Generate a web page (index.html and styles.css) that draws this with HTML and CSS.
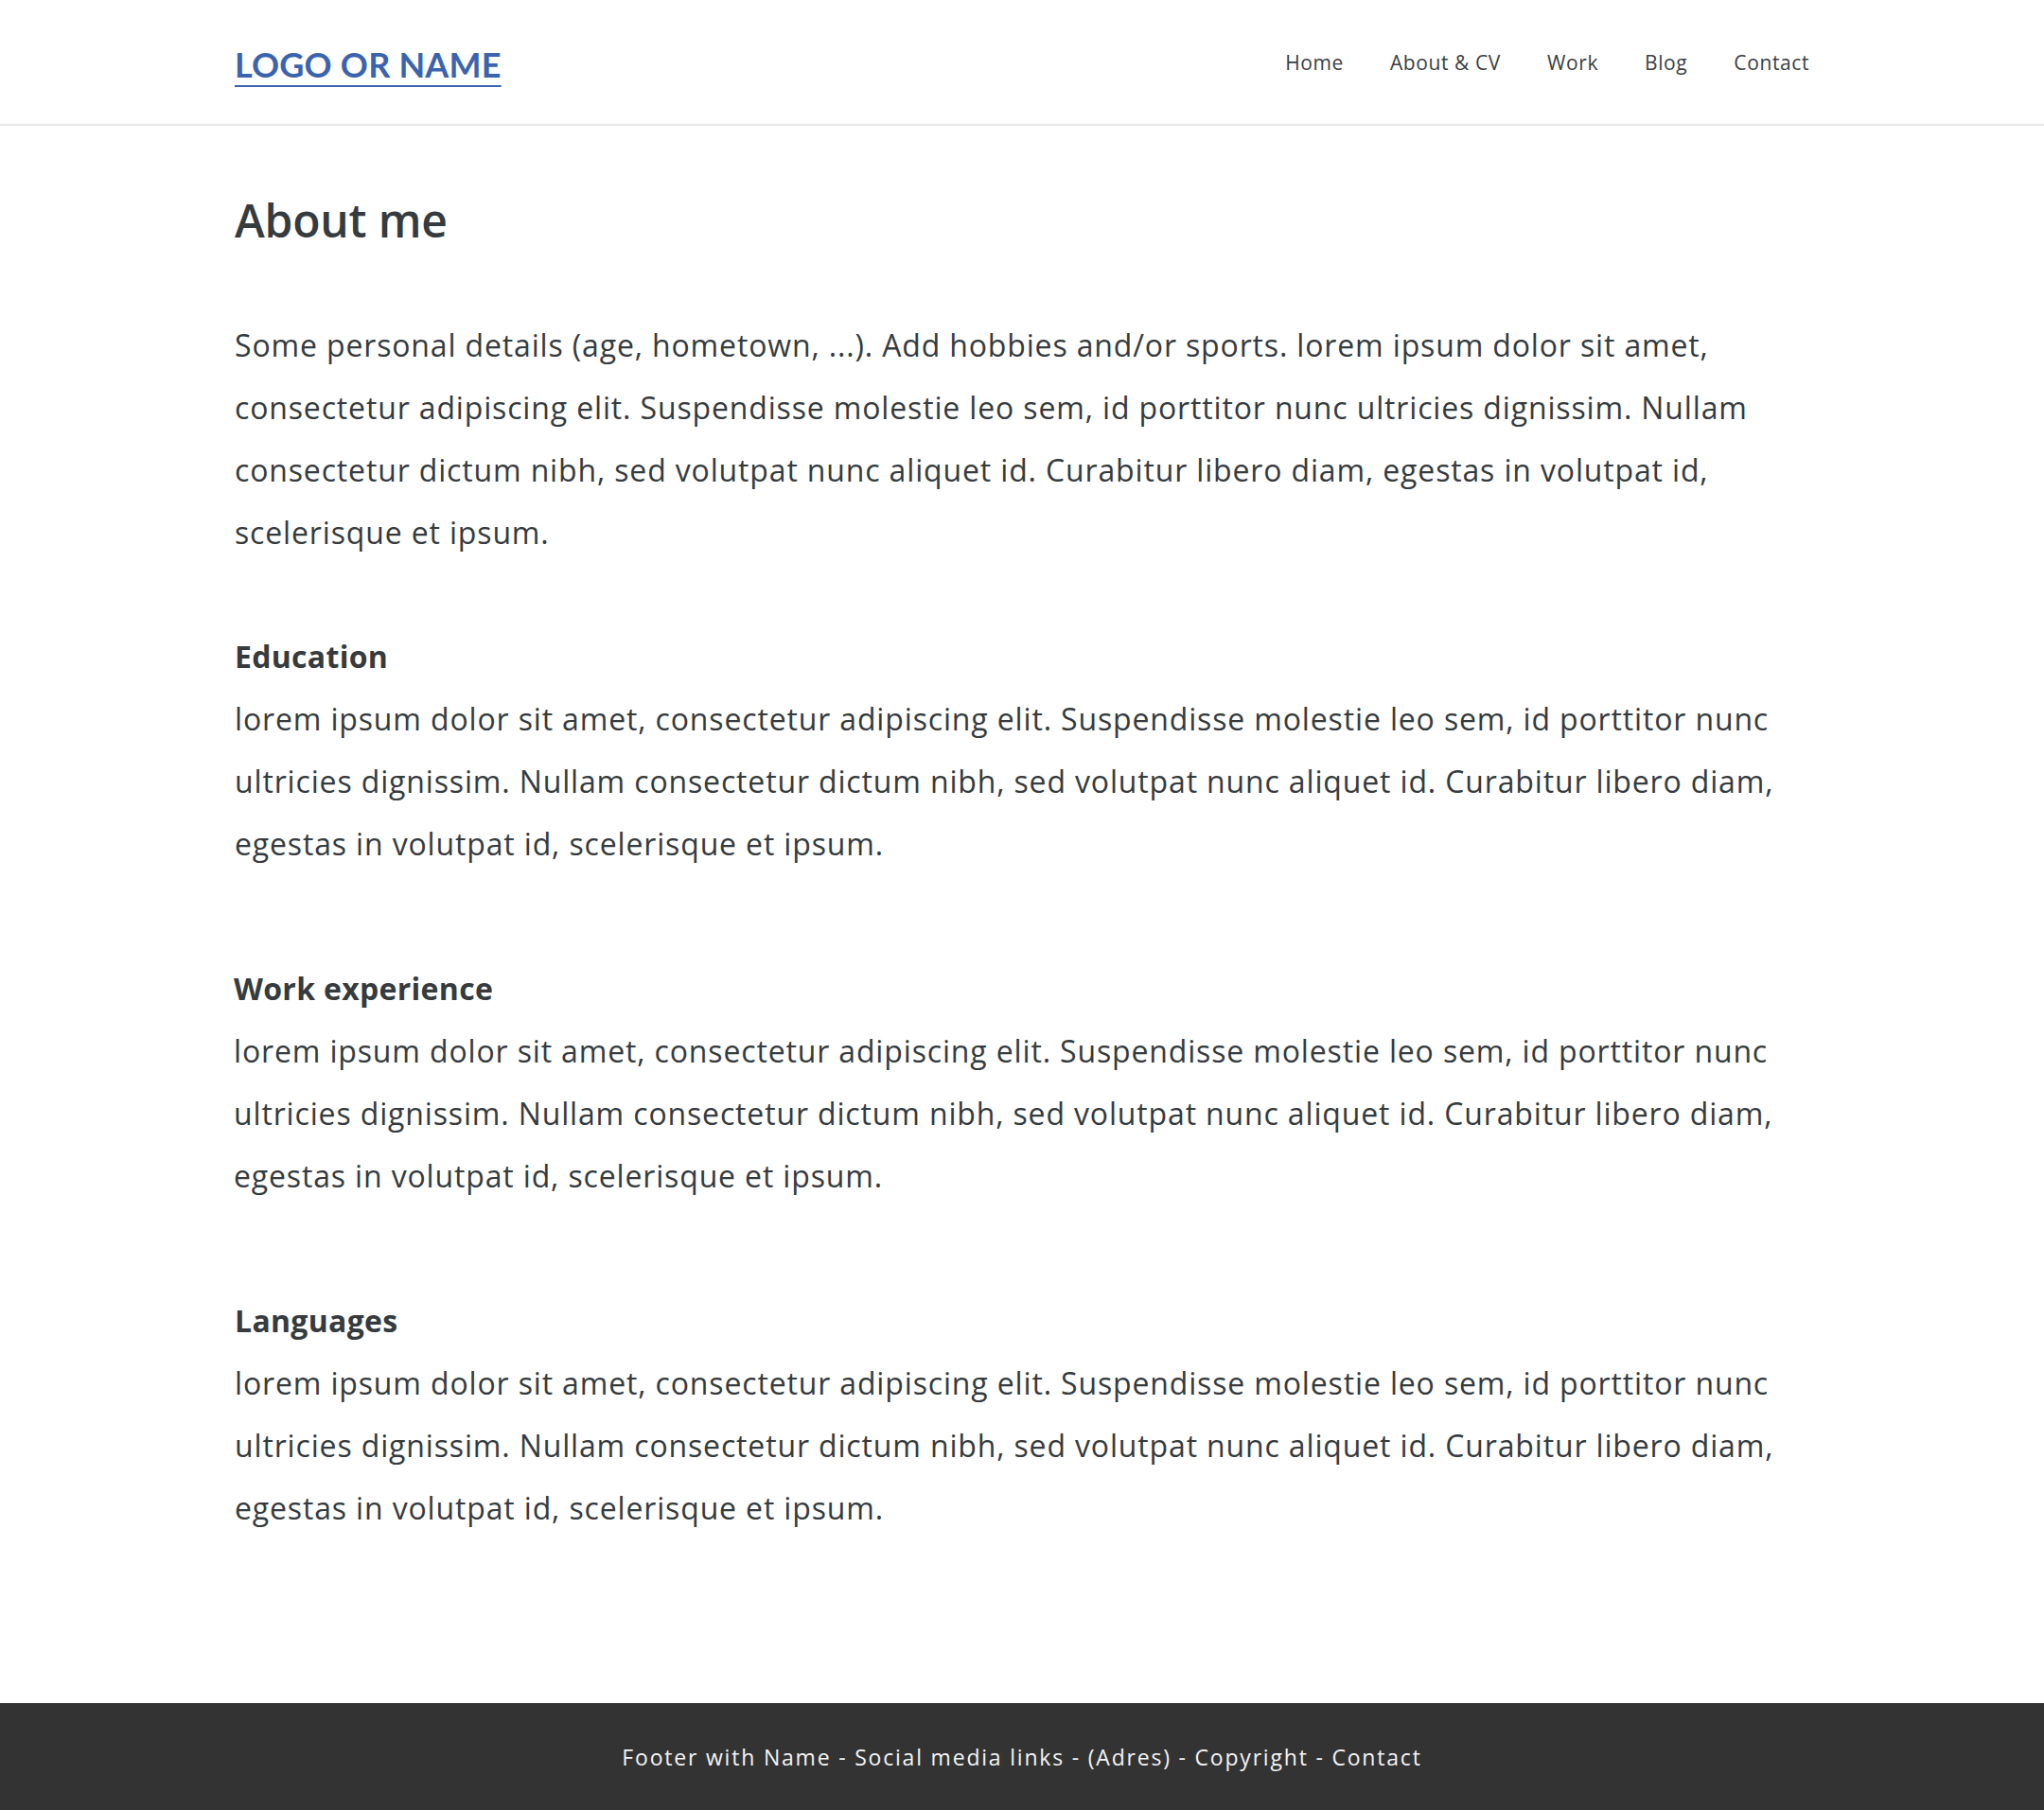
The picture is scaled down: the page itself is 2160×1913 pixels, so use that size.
FILE: index.html
```html
<!DOCTYPE html>
<html lang="en">
<head>
<meta charset="utf-8">
<title>About me</title>
<link rel="stylesheet" href="styles.css">
</head>
<body>
<header class="site-header">
  <div class="container header-inner">
    <a class="logo" href="#">LOGO OR NAME</a>
    <nav class="nav">
      <a href="#">Home</a>
      <a href="#">About &amp; CV</a>
      <a href="#">Work</a>
      <a href="#">Blog</a>
      <a href="#">Contact</a>
    </nav>
  </div>
</header>
<main class="container content">
  <h1 class="title">About me</h1>
  <p class="intro">Some personal details (age, hometown, ...). Add hobbies and/or sports. lorem ipsum dolor sit amet, consectetur adipiscing elit. Suspendisse molestie leo sem, id porttitor nunc ultricies dignissim. Nullam consectetur dictum nibh, sed volutpat nunc aliquet id. Curabitur libero diam, egestas in volutpat id, scelerisque et ipsum.</p>
  <section class="section section-first">
    <h3 class="section-title">Education</h3>
    <p>lorem ipsum dolor sit amet, consectetur adipiscing elit. Suspendisse molestie leo sem, id porttitor nunc ultricies dignissim. Nullam consectetur dictum nibh, sed volutpat nunc aliquet id. Curabitur libero diam, egestas in volutpat id, scelerisque et ipsum.</p>
  </section>
  <section class="section shifted">
    <h3 class="section-title">Work experience</h3>
    <p>lorem ipsum dolor sit amet, consectetur adipiscing elit. Suspendisse molestie leo sem, id porttitor nunc ultricies dignissim. Nullam consectetur dictum nibh, sed volutpat nunc aliquet id. Curabitur libero diam, egestas in volutpat id, scelerisque et ipsum.</p>
  </section>
  <section class="section">
    <h3 class="section-title">Languages</h3>
    <p>lorem ipsum dolor sit amet, consectetur adipiscing elit. Suspendisse molestie leo sem, id porttitor nunc ultricies dignissim. Nullam consectetur dictum nibh, sed volutpat nunc aliquet id. Curabitur libero diam, egestas in volutpat id, scelerisque et ipsum.</p>
  </section>
</main>
<footer class="site-footer">
  Footer with Name - Social media links - (Adres) - Copyright - Contact
</footer>
</body>
</html>
```

FILE: styles.css
```css
* { box-sizing: border-box; }
html, body { margin: 0; padding: 0; }
body {
  min-height: 100vh;
  display: flex;
  flex-direction: column;
  background: #ffffff;
  color: #353b3e;
  font-family: "Open Sans", "Noto Sans", sans-serif;
}
.container {
  width: 1664px;
  margin: 0 auto;
}
.site-header {
  height: 133px;
  border-bottom: 2px solid #e8eaea;
}
.header-inner {
  height: 100%;
  display: flex;
  align-items: center;
  justify-content: space-between;
}
.logo {
  font-family: Lato, "Liberation Sans", sans-serif;
  font-weight: 700;
  font-size: 36px;
  letter-spacing: 0.2px;
  color: #3b64ae;
  text-decoration: underline;
  text-decoration-thickness: 2px;
  text-underline-offset: 8px;
  margin-top: 4px;
}
.nav {
  display: flex;
  gap: 49px;
}
.nav a {
  color: #3a3f42;
  text-decoration: none;
  font-size: 21px;
  letter-spacing: 0.6px;
}
.content {
  flex: 1;
  padding-top: 71px;
  padding-bottom: 60px;
}
.title {
  margin: 0;
  font-size: 48px;
  line-height: 58px;
  font-weight: 600;
  letter-spacing: -0.2px;
  color: #353b3e;
}
.content p {
  margin: 0;
  font-size: 32px;
  line-height: 66px;
  letter-spacing: 0.85px;
}
.intro { margin-top: 70px !important; }
.section { margin-top: 101px; }
.section-first { margin-top: 79px; }
.shifted { margin-left: -1px; }
.section-title {
  margin: 0 0 14px;
  font-size: 32px;
  line-height: 38px;
  font-weight: 700;
  letter-spacing: 0.3px;
}
.site-footer {
  height: 113px;
  background: #333333;
  color: #f4f4f4;
  display: flex;
  align-items: center;
  justify-content: center;
  font-size: 23px;
  letter-spacing: 1.8px;
  font-family: "Open Sans", "Noto Sans", sans-serif;
}
```
